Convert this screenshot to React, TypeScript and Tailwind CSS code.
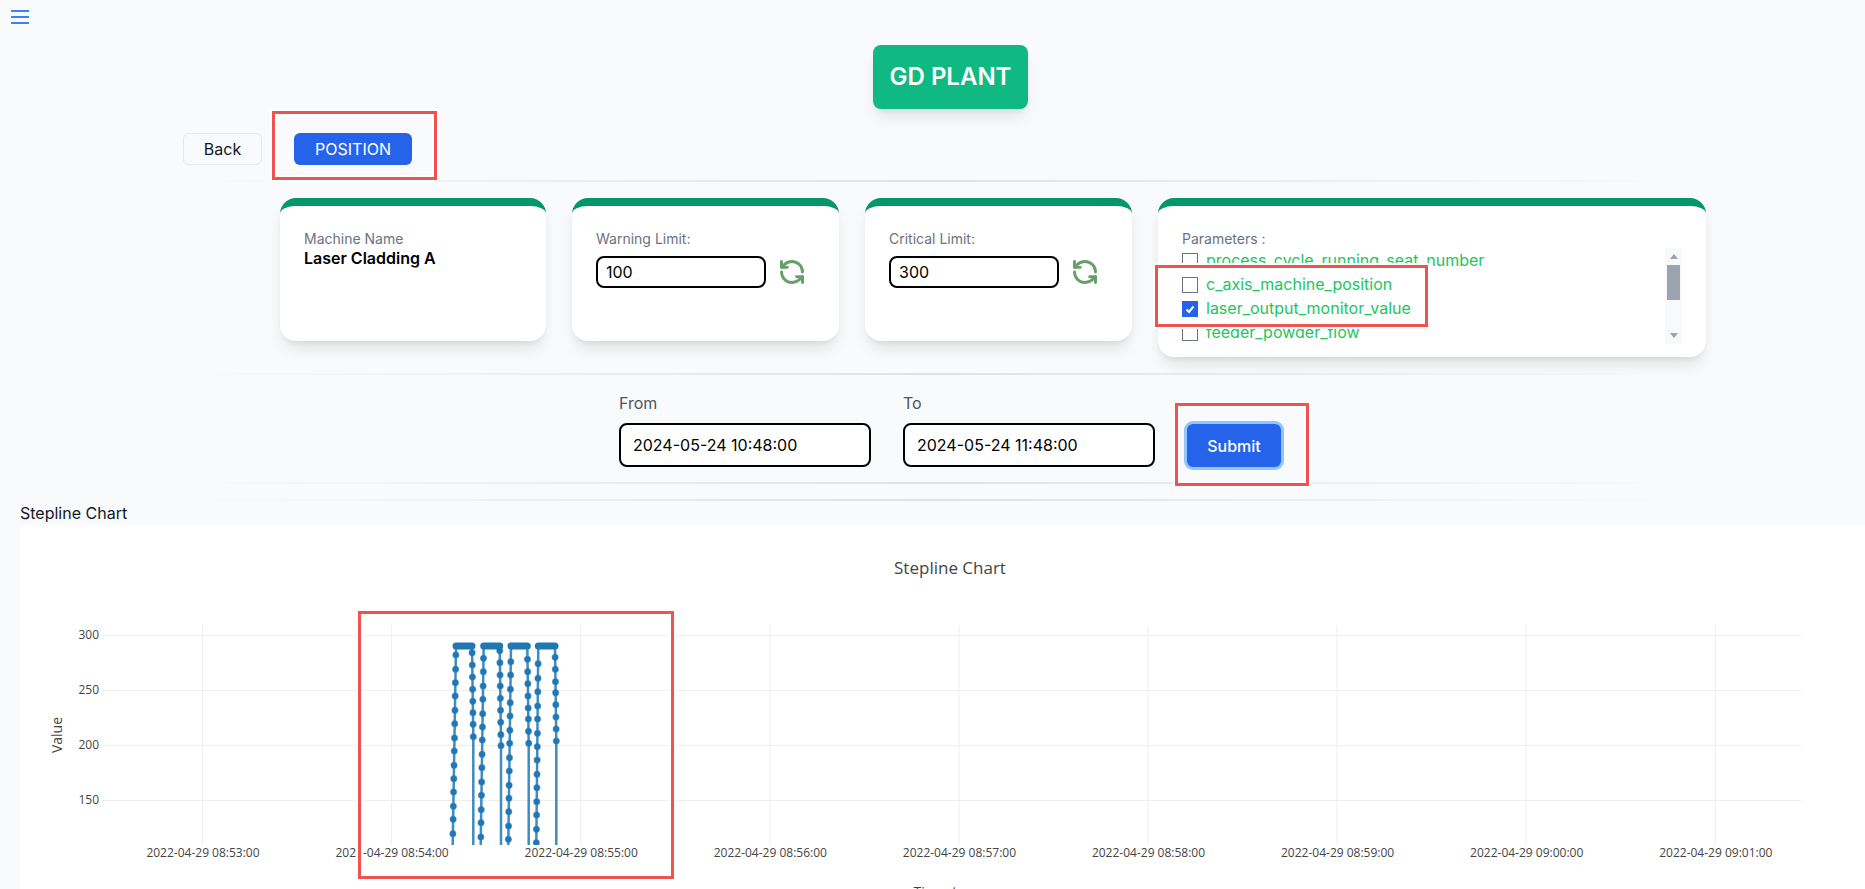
import { RefreshCcw } from "lucide-react"

const parameters = [
  { name: "process_cycle_running_seat_number", checked: false },
  { name: "c_axis_machine_position", checked: false },
  { name: "laser_output_monitor_value", checked: true },
  { name: "feeder_powder_flow", checked: false },
]

const timeTicks = [
  "2022-04-29 08:53:00",
  "2022-04-29 08:54:00",
  "2022-04-29 08:55:00",
  "2022-04-29 08:56:00",
  "2022-04-29 08:57:00",
  "2022-04-29 08:58:00",
  "2022-04-29 08:59:00",
  "2022-04-29 09:00:00",
  "2022-04-29 09:01:00",
]

const valueTicks = [
  { label: "300", y: 635 },
  { label: "250", y: 690 },
  { label: "200", y: 745 },
  { label: "150", y: 800 },
]

// chart x/y are page coordinates, the svg viewBox starts at the chart's corner
const cycles = [
  {
    up: { top: 456, bottom: 452.7, ys: [655, 669.3, 682.7, 696, 710.3, 723.7, 738, 751, 765.3, 778.7, 792, 806.3, 819.3, 833.7] },
    down: { top: 472, bottom: 473.3, ys: [652.7, 665, 677, 689.3, 701.3, 712.7, 724.3, 736.7] },
  },
  {
    up: { top: 483.7, bottom: 480.7, ys: [658.3, 671.7, 686, 699.3, 713.7, 727, 740, 754.3, 767.7, 782, 795.3, 809.7, 822.7, 837] },
    down: { top: 499.7, bottom: 501, ys: [650.7, 662.7, 675, 686, 698.3, 710.3, 722.3, 734.7, 745.7] },
  },
  {
    up: { top: 511, bottom: 508.3, ys: [661.7, 675, 689.3, 702.7, 716, 730.3, 743.3, 757.7, 771, 785.3, 798.3, 811.7, 826, 839.3] },
    down: { top: 527.3, bottom: 528.7, ys: [659.3, 671.7, 683.7, 696, 708, 719, 731.3, 743.3] },
  },
  {
    up: { top: 538.3, bottom: 536.3, ys: [663.7, 678.3, 691.7, 706, 719, 733.3, 746.7, 760, 774.3, 787.7, 801.7, 815, 829.3, 842.7] },
    down: { top: 555, bottom: 556.3, ys: [657.3, 669.3, 681.7, 692.7, 704.7, 717, 729, 741] },
  },
]

const BAR_Y = 646
const PLOT_BOTTOM = 845

type Column = { top: number; bottom: number; ys: number[] }

// x drifts along the markers, the line runs straight down after the last one
function columnX(col: Column, y: number, end: number) {
  return col.top + ((col.bottom - col.top) * (y - BAR_Y)) / (end - BAR_Y)
}

function Markers({ col, end }: { col: Column; end: number }) {
  return (
    <>
      {col.ys.map((y) => (
        <circle key={y} cx={columnX(col, y, end)} cy={y} r="3" stroke="#1f77b4" strokeOpacity="0.5" strokeWidth="1.2" />
      ))}
    </>
  )
}

function Chart() {
  return (
    <svg viewBox="20 525 1845 364" className="block h-[364px] w-full" style={{ fontFamily: "'Open Sans', sans-serif" }}>
      <defs>
        <clipPath id="plot">
          <rect x="103" y="625" width="1698" height="220" />
        </clipPath>
      </defs>

      <text x="950" y="574" textAnchor="middle" fontSize="17" fill="#444">Stepline Chart</text>

      {/* Grid */}
      {valueTicks.map((t) => (
        <line key={t.label} x1="103" x2="1801" y1={t.y + 0.5} y2={t.y + 0.5} stroke="#eee" />
      ))}
      {timeTicks.map((t, i) => (
        <line key={t} x1={202.5 + i * 189.1} x2={202.5 + i * 189.1} y1="625" y2={PLOT_BOTTOM} stroke="#eee" />
      ))}

      {/* Axes */}
      {valueTicks.map((t) => (
        <text key={t.label} x="99" y={t.y + 4} textAnchor="end" fontSize="12" fill="#444">{t.label}</text>
      ))}
      {timeTicks.map((t, i) => (
        <text key={t} x={203 + i * 189.1} y="857" textAnchor="middle" fontSize="12" fill="#444">{t}</text>
      ))}
      <text transform="translate(62 735) rotate(-90)" textAnchor="middle" fontSize="14" fill="#444">Value</text>
      <text x="950" y="897" textAnchor="middle" fontSize="14" fill="#444">Timestamp</text>

      {/* Series */}
      <g clipPath="url(#plot)" fill="#1f77b4">
        {cycles.map((c, i) => {
          const lastDown = c.down.ys[c.down.ys.length - 1]
          return (
            <g key={i}>
              <path
                d={`M${c.up.bottom} ${PLOT_BOTTOM} L${c.up.top} ${BAR_Y} L${c.down.top} ${BAR_Y} L${c.down.bottom} ${lastDown} L${c.down.bottom} ${PLOT_BOTTOM}`}
                fill="none"
                stroke="#1f77b4"
                strokeWidth="2.5"
                strokeOpacity="0.85"
              />
              <line x1={c.up.top} x2={c.down.top} y1={BAR_Y} y2={BAR_Y} stroke="#1f77b4" strokeWidth="7" strokeLinecap="round" />
              <Markers col={c.up} end={PLOT_BOTTOM} />
              <Markers col={c.down} end={lastDown} />
            </g>
          )
        })}
      </g>
    </svg>
  )
}

function Divider() {
  return <div className="h-0.5 bg-linear-to-r from-transparent via-[#dfe1e4] to-transparent" />
}

function LimitCard({ label, value }: { label: string; value: string }) {
  return (
    <div className="h-[143px] w-[267px] rounded-2xl border-t-8 border-[#059669] bg-white px-6 pt-[23px] shadow-lg">
      <p className="text-sm leading-5 text-[#6b7280]">{label}</p>
      <div className="mt-[7px] flex items-center gap-3">
        <input
          readOnly
          value={value}
          className="h-8 w-[170px] rounded-lg border-2 border-black bg-white px-2 text-base text-black outline-none"
        />
        <RefreshCcw size={28} strokeWidth={2.5} className="text-[#689f68]" />
      </div>
    </div>
  )
}

function Annotation({ className }: { className: string }) {
  return <div className={`pointer-events-none absolute border-[3px] border-[#ef5350] shadow-[0_0_0_2px_white,inset_0_0_0_2px_white] ${className}`} />
}

export default function App() {
  return (
    <div className="relative h-[889px] w-full overflow-hidden bg-[#f9fafb] font-['Inter',sans-serif] text-black">
      {/* Menu */}
      <div className="h-[45px] pl-[11px] pt-[10px]">
        <svg width="18" height="14" viewBox="0 0 18 14" fill="#3b82f6">
          <rect y="0" width="18" height="2" />
          <rect y="6" width="18" height="2" />
          <rect y="12" width="18" height="2" />
        </svg>
      </div>

      {/* Title */}
      <div className="flex justify-center pl-9">
        <h1 className="flex h-16 items-center rounded-lg bg-[#10b981] px-[17px] text-2xl font-semibold text-white shadow-lg">
          GD PLANT
        </h1>
      </div>

      {/* Actions */}
      <div className="mt-6 flex gap-8 pl-[183px]">
        <button className="h-8 w-[79px] rounded-md border border-[#e5e7eb] bg-[#f9fafb] text-base text-[#111827]">Back</button>
        <button className="h-8 w-[118px] rounded-md bg-[#2563eb] text-base text-white">POSITION</button>
      </div>

      <div className="mx-[183px] mt-[15px]">
        <Divider />
      </div>

      {/* Cards */}
      <div className="mt-4 flex items-start gap-[26px] pl-[280px]">
        <div className="h-[143px] w-[266px] rounded-2xl border-t-8 border-[#059669] bg-white px-6 pt-[23px] shadow-lg">
          <p className="text-sm leading-5 text-[#6b7280]">Machine Name</p>
          <p className="text-base font-semibold leading-[18px]">Laser Cladding A</p>
        </div>
        <LimitCard label="Warning Limit:" value="100" />
        <LimitCard label="Critical Limit:" value="300" />
        <div className="h-[159px] w-[548px] rounded-2xl border-t-8 border-[#059669] bg-white px-6 pt-[23px] shadow-lg">
          <p className="text-sm leading-[19px] text-[#6b7280]">Parameters :</p>
          <div className="flex h-24">
            <ul className="flex-1 overflow-hidden pt-px">
              {parameters.map((p) => (
                <li key={p.name} className="flex h-6 items-center gap-2 text-base text-[#22c55e]">
                  <span className={`flex h-4 w-4 items-center justify-center border ${p.checked ? "border-[#2563eb] bg-[#2563eb]" : "border-[#6b7280] bg-white"}`}>
                    {p.checked && (
                      <svg width="12" height="12" viewBox="0 0 12 12" fill="none" stroke="white" strokeWidth="2">
                        <path d="M2.5 6.5 5 9l4.5-5.5" />
                      </svg>
                    )}
                  </span>
                  <span className="pb-0.5">{p.name}</span>
                </li>
              ))}
            </ul>
            {/* Scrollbar */}
            <div className="flex w-[17px] flex-col items-center justify-between bg-[#f8f9fa] py-[6px]">
              <span className="h-0 w-0 border-x-[4px] border-b-[5px] border-x-transparent border-b-[#9ca3af]" />
              <span className="mb-auto mt-[6px] h-[35px] w-[13px] bg-[#9ca3af]" />
              <span className="h-0 w-0 border-x-[4px] border-t-[5px] border-x-transparent border-t-[#9ca3af]" />
            </div>
          </div>
        </div>
      </div>

      <div className="mx-[183px] mt-4">
        <Divider />
      </div>

      {/* Date range */}
      <div className="mt-4 flex items-end pl-[619px]">
        <label className="mr-8 block w-[252px]">
          <span className="block text-base leading-6 text-[#4b5563]">From</span>
          <input
            readOnly
            value="2024-05-24 10:48:00"
            className="mt-2 h-11 w-full rounded-lg border-2 border-black bg-white px-3 text-base outline-none"
          />
        </label>
        <label className="mr-8 block w-[252px]">
          <span className="block text-base leading-6 text-[#4b5563]">To</span>
          <input
            readOnly
            value="2024-05-24 11:48:00"
            className="mt-2 h-11 w-full rounded-lg border-2 border-black bg-white px-3 text-base outline-none"
          />
        </label>
        <button className="h-[43px] w-[94px] rounded-md bg-[#2563eb] text-base font-medium text-white ring-[3px] ring-[#93c5fd]">
          Submit
        </button>
      </div>

      <div className="mx-[183px] mt-[15px]">
        <Divider />
      </div>
      <div className="mx-[183px] mt-[15px]">
        <Divider />
      </div>

      {/* Chart */}
      <p className="pl-5 text-base leading-6 text-[#111827]">Stepline Chart</p>
      <div className="ml-5 bg-white">
        <Chart />
      </div>

      {/* Review marks */}
      <Annotation className="left-[272px] top-[111px] h-[69px] w-[165px]" />
      <Annotation className="left-[1155px] top-[265px] h-[62px] w-[273px]" />
      <Annotation className="left-[1175px] top-[403px] h-[83px] w-[134px]" />
      <Annotation className="left-[358px] top-[611px] h-[268px] w-[316px]" />
    </div>
  )
}
